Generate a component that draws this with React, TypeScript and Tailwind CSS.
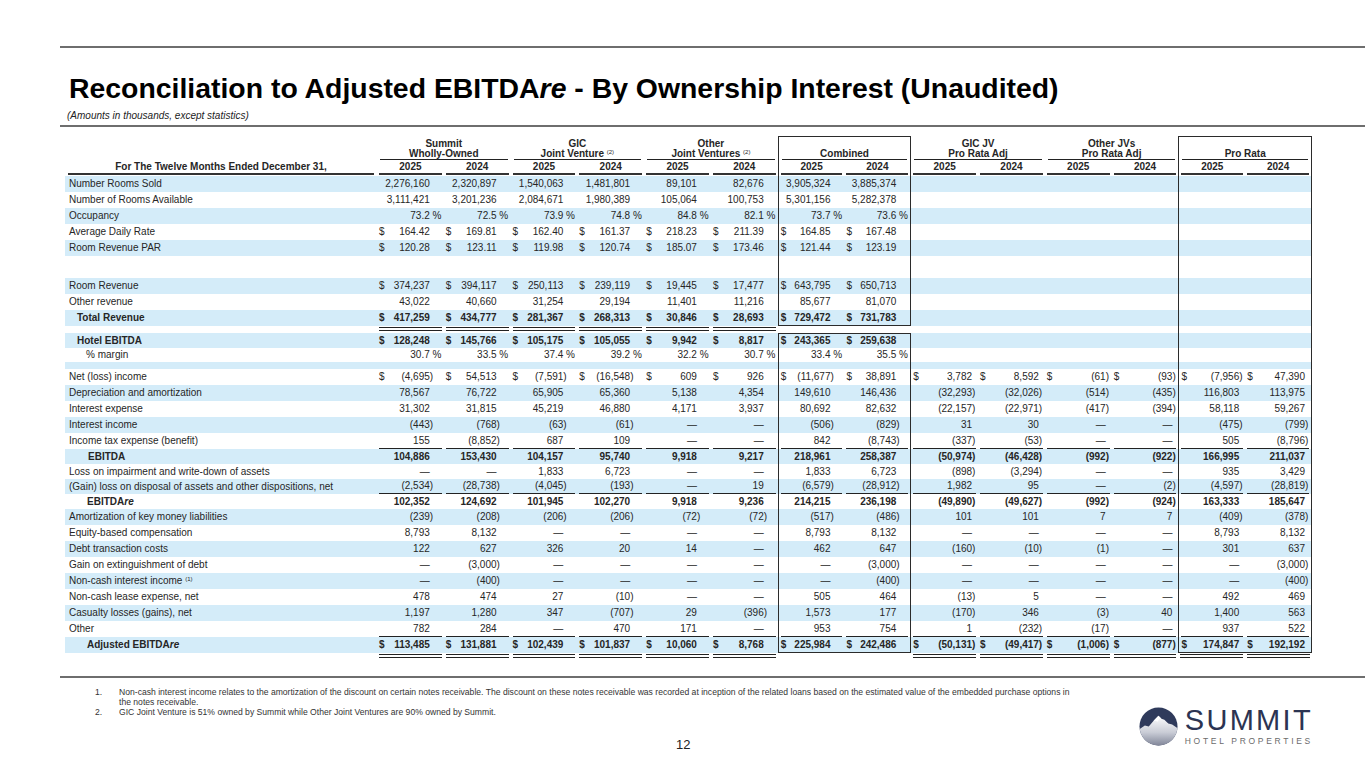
import type { ReactNode } from "react";
import clsx from "clsx";

const GRID = "grid grid-cols-[312px_repeat(14,minmax(0,1fr))]";

type Row = {
  label?: ReactNode;
  v?: string[];
  blue?: boolean;
  bold?: boolean;
  pl?: string;
  h?: string;
  ul?: boolean;
  combined?: boolean;
  cTop?: boolean;
  cBot?: boolean;
  pBot?: boolean;
};

const Re = () => <i>re</i>;

const rows: Row[] = [
  { label: "Number Rooms Sold", blue: true, v: ["2,276,160", "2,320,897", "1,540,063", "1,481,801", "89,101", "82,676", "3,905,324", "3,885,374"] },
  { label: "Number of Rooms Available", v: ["3,111,421", "3,201,236", "2,084,671", "1,980,389", "105,064", "100,753", "5,301,156", "5,282,378"] },
  { label: "Occupancy", blue: true, v: ["73.2 %", "72.5 %", "73.9 %", "74.8 %", "84.8 %", "82.1 %", "73.7 %", "73.6 %"] },
  { label: "Average Daily Rate", v: ["$164.42", "$169.81", "$162.40", "$161.37", "$218.23", "$211.39", "$164.85", "$167.48"] },
  { label: "Room Revenue PAR", blue: true, v: ["$120.28", "$123.11", "$119.98", "$120.74", "$185.07", "$173.46", "$121.44", "$123.19"] },
  { h: "h-[22px]" },
  { label: "Room Revenue", blue: true, v: ["$374,237", "$394,117", "$250,113", "$239,119", "$19,445", "$17,477", "$643,795", "$650,713"] },
  { label: "Other revenue", v: ["43,022", "40,660", "31,254", "29,194", "11,401", "11,216", "85,677", "81,070"] },
  { label: "Total Revenue", blue: true, bold: true, pl: "pl-[12px]", cBot: true, v: ["$417,259", "$434,777", "$281,367", "$268,313", "$30,846", "$28,693", "$729,472", "$731,783"] },
];

const rows2: Row[] = [
  { label: "Hotel EBITDA", blue: true, bold: true, pl: "pl-[12px]", h: "h-[15px]", cTop: true, v: ["$128,248", "$145,766", "$105,175", "$105,055", "$9,942", "$8,817", "$243,365", "$259,638"] },
  { label: "% margin", pl: "pl-[21px]", h: "h-[14px]", v: ["30.7 %", "33.5 %", "37.4 %", "39.2 %", "32.2 %", "30.7 %", "33.4 %", "35.5 %"] },
  { blue: true, h: "h-[7px]" },
  { label: "Net (loss) income", v: ["$(4,695)", "$54,513", "$(7,591)", "$(16,548)", "$609", "$926", "$(11,677)", "$38,891", "$3,782", "$8,592", "$(61)", "$(93)", "$(7,956)", "$47,390"] },
  { label: "Depreciation and amortization", blue: true, v: ["78,567", "76,722", "65,905", "65,360", "5,138", "4,354", "149,610", "146,436", "(32,293)", "(32,026)", "(514)", "(435)", "116,803", "113,975"] },
  { label: "Interest expense", v: ["31,302", "31,815", "45,219", "46,880", "4,171", "3,937", "80,692", "82,632", "(22,157)", "(22,971)", "(417)", "(394)", "58,118", "59,267"] },
  { label: "Interest income", blue: true, v: ["(443)", "(768)", "(63)", "(61)", "—", "—", "(506)", "(829)", "31", "30", "—", "—", "(475)", "(799)"] },
  { label: "Income tax expense (benefit)", ul: true, v: ["155", "(8,852)", "687", "109", "—", "—", "842", "(8,743)", "(337)", "(53)", "—", "—", "505", "(8,796)"] },
  { label: "EBITDA", blue: true, bold: true, pl: "pl-[23px]", h: "h-[15px]", v: ["104,886", "153,430", "104,157", "95,740", "9,918", "9,217", "218,961", "258,387", "(50,974)", "(46,428)", "(992)", "(922)", "166,995", "211,037"] },
  { label: "Loss on impairment and write-down of assets", h: "h-[15px]", v: ["—", "—", "1,833", "6,723", "—", "—", "1,833", "6,723", "(898)", "(3,294)", "—", "—", "935", "3,429"] },
  { label: "(Gain) loss on disposal of assets and other dispositions, net", blue: true, ul: true, h: "h-[15px]", v: ["(2,534)", "(28,738)", "(4,045)", "(193)", "—", "19", "(6,579)", "(28,912)", "1,982", "95", "—", "(2)", "(4,597)", "(28,819)"] },
  { label: <>EBITDA<Re /></>, bold: true, pl: "pl-[22px]", h: "h-[15px]", v: ["102,352", "124,692", "101,945", "102,270", "9,918", "9,236", "214,215", "236,198", "(49,890)", "(49,627)", "(992)", "(924)", "163,333", "185,647"] },
  { label: "Amortization of key money liabilities", blue: true, v: ["(239)", "(208)", "(206)", "(206)", "(72)", "(72)", "(517)", "(486)", "101", "101", "7", "7", "(409)", "(378)"] },
  { label: "Equity-based compensation", v: ["8,793", "8,132", "—", "—", "—", "—", "8,793", "8,132", "—", "—", "—", "—", "8,793", "8,132"] },
  { label: "Debt transaction costs", blue: true, v: ["122", "627", "326", "20", "14", "—", "462", "647", "(160)", "(10)", "(1)", "—", "301", "637"] },
  { label: "Gain on extinguishment of debt", v: ["—", "(3,000)", "—", "—", "—", "—", "—", "(3,000)", "—", "—", "—", "—", "—", "(3,000)"] },
  { label: <>Non-cash interest income <sup className="text-[6px]">(1)</sup></>, blue: true, v: ["—", "(400)", "—", "—", "—", "—", "—", "(400)", "—", "—", "—", "—", "—", "(400)"] },
  { label: "Non-cash lease expense, net", v: ["478", "474", "27", "(10)", "—", "—", "505", "464", "(13)", "5", "—", "—", "492", "469"] },
  { label: "Casualty losses (gains), net", blue: true, v: ["1,197", "1,280", "347", "(707)", "29", "(396)", "1,573", "177", "(170)", "346", "(3)", "40", "1,400", "563"] },
  { label: "Other", ul: true, v: ["782", "284", "—", "470", "171", "—", "953", "754", "1", "(232)", "(17)", "—", "937", "522"] },
  { label: <>Adjusted EBITDA<Re /></>, blue: true, bold: true, pl: "pl-[22px]", cBot: true, pBot: true, v: ["$113,485", "$131,881", "$102,439", "$101,837", "$10,060", "$8,768", "$225,984", "$242,486", "$(50,131)", "$(49,417)", "$(1,006)", "$(877)", "$174,847", "$192,192"] },
];

function Cell({ i, val, r }: { i: number; val?: string; r: Row }) {
  const right = i >= 8;
  const inC = r.combined !== false && (i === 6 || i === 7);
  const inP = i === 12 || i === 13;
  let s = val ?? "";
  const dollar = s.startsWith("$");
  if (dollar) s = s.slice(1);
  let suffix = "";
  if (s.endsWith(")")) {
    suffix = ")";
    s = s.slice(0, -1);
  } else if (s.endsWith(" %")) {
    suffix = " %";
    s = s.slice(0, -2);
  }
  return (
    <div
      className={clsx(
        "min-w-0 border-[#2b2b2b]",
        inC && i === 6 && "border-l",
        inC && i === 7 && "border-r",
        inP && i === 12 && "border-l",
        inP && i === 13 && "border-r",
        inC && r.cTop && "border-t",
        inC && r.cBot && "border-b",
        inP && r.pBot && "border-b"
      )}
    >
      <div className={clsx("mx-[2px] flex h-full items-center whitespace-pre", r.ul && "border-b border-[#222]")}>
        {dollar && <span>$</span>}
        <span className="ml-auto">{s}</span>
        <span className={right ? "w-[4px] shrink-0" : "w-[12px] shrink-0"}>{suffix}</span>
      </div>
    </div>
  );
}

function DataRow({ r }: { r: Row }) {
  return (
    <div className={clsx(GRID, r.h ?? "h-4", r.blue && "bg-[#d4ecf9]", r.bold && "font-bold")}>
      <div className={clsx("flex items-center whitespace-nowrap", r.pl ?? "pl-[4px]")}>
        <span>{r.label}</span>
      </div>
      {Array.from({ length: 14 }, (_, i) => (
        <Cell key={i} i={i} val={r.v?.[i]} r={r} />
      ))}
    </div>
  );
}

function DoubleRow({ cols, pro }: { cols: number[]; pro: boolean }) {
  return (
    <div className={clsx(GRID, "h-[7px]")}>
      <div />
      {Array.from({ length: 14 }, (_, i) => (
        <div
          key={i}
          className={clsx("border-[#2b2b2b]", pro && i === 12 && "border-l", pro && i === 13 && "border-r")}
        >
          {cols.includes(i) && <div className="mx-[2px] mt-px h-[4px] border-y border-[#222]" />}
        </div>
      ))}
    </div>
  );
}

const groups = [
  { top: "Summit", sub: <>Wholly-Owned</>, box: false },
  { top: "GIC", sub: <>Joint Venture <sup className="text-[6px] font-normal">(2)</sup></>, box: false },
  { top: "Other", sub: <>Joint Ventures <sup className="text-[6px] font-normal">(2)</sup></>, box: false },
  { top: "", sub: <>Combined</>, box: true },
  { top: "GIC JV", sub: <>Pro Rata Adj</>, box: false },
  { top: "Other JVs", sub: <>Pro Rata Adj</>, box: false },
  { top: "", sub: <>Pro Rata</>, box: true },
];

function Header() {
  return (
    <div className="font-bold">
      <div className={clsx(GRID, "h-[13px]")}>
        <div />
        {groups.map((g, k) => (
          <div
            key={k}
            className={clsx("col-span-2 flex items-end justify-center leading-[11px] border-[#2b2b2b]", g.box && "border-x border-t")}
          >
            {g.top}
          </div>
        ))}
      </div>
      <div className={clsx(GRID, "h-[11px]")}>
        <div />
        {groups.map((g, k) => (
          <div key={k} className={clsx("col-span-2 border-[#2b2b2b]", g.box && "border-x")}>
            <div className="mx-[3px] h-full border-b border-[#222] text-center leading-[10px] whitespace-nowrap">{g.sub}</div>
          </div>
        ))}
      </div>
      <div className={clsx(GRID, "h-[15px]")}>
        <div className="mx-[3px] flex items-center justify-center border-b-2 border-[#333]">
          For The Twelve Months Ended December 31,
        </div>
        {Array.from({ length: 14 }, (_, i) => (
          <div
            key={i}
            className={clsx(
              "border-[#2b2b2b]",
              (i === 6 || i === 12) && "border-l",
              (i === 7 || i === 13) && "border-r"
            )}
          >
            <div className="mx-[2px] flex h-full items-center justify-center border-b-2 border-[#333]">
              {i % 2 === 0 ? "2025" : "2024"}
            </div>
          </div>
        ))}
      </div>
      <div className={clsx(GRID, "h-px")}>
        <div />
        {Array.from({ length: 14 }, (_, i) => (
          <div
            key={i}
            className={clsx(
              "border-[#2b2b2b]",
              (i === 6 || i === 12) && "border-l",
              (i === 7 || i === 13) && "border-r"
            )}
          />
        ))}
      </div>
    </div>
  );
}

function Logo() {
  return (
    <div className="flex items-center gap-[7px]">
      <svg width="39" height="39" viewBox="0 0 40 40">
        <defs>
          <clipPath id="lc">
            <circle cx="20" cy="20" r="19.5" />
          </clipPath>
          <linearGradient id="snow" x1="0" y1="0" x2="0" y2="1">
            <stop offset="0" stopColor="#ffffff" />
            <stop offset="0.55" stopColor="#c9ccd6" />
            <stop offset="1" stopColor="#7f8497" />
          </linearGradient>
        </defs>
        <g clipPath="url(#lc)">
          <rect width="40" height="40" fill="#2f3a5b" />
          <path d="M0 23 L6 19 L10 20 L15 14 L18 11 L20 9 L23 12 L26 13 L30 17 L34 18 L40 22 L40 40 L0 40 Z" fill="url(#snow)" />
          <path d="M15 14 L18 11 L20 9 L23 12 L21 12 L19 15 L17 14 Z" fill="#ffffff" />
        </g>
      </svg>
      <div className="flex flex-col">
        <div className="text-[29px] leading-[26px] tracking-[2.3px] text-[#2c3452]">SUMMIT</div>
        <div className="mt-[4px] text-[8.5px] leading-[9px] tracking-[2.7px] text-[#6b6b6b]">HOTEL PROPERTIES</div>
      </div>
    </div>
  );
}

export default function App() {
  return (
    <div className="relative h-[768px] w-[1365px] overflow-hidden bg-white font-['Liberation_Sans',Arial,sans-serif] text-[#222]">
      <div className="pt-[46px]">
        <div className="ml-[60px] h-[2px] bg-[#6e6e6e]" />
        <h1 className="ml-[69px] mt-[24px] text-[28.4px] font-bold leading-[32px] text-black">
          Reconciliation to Adjusted EBITDA<i>re</i> - By Ownership Interest (Unaudited)
        </h1>
        <p className="ml-[67px] mt-[6px] text-[10px] italic leading-[12px] text-[#222]">
          (Amounts in thousands, except statistics)
        </p>
        <div className="ml-[60px] mt-[3px] h-[2px] bg-[#6e6e6e]" />

        <div className="ml-[65px] mt-[9px] w-[1247px] text-[10px] leading-[12px] text-[#262626]">
          <Header />
          {rows.map((r, k) => (
            <DataRow key={k} r={r} />
          ))}
          <DoubleRow cols={[0, 1, 2, 3, 4, 5]} pro />
          {rows2.map((r, k) => (
            <DataRow key={k} r={r} />
          ))}
          <DoubleRow cols={[0, 1, 2, 3, 4, 5, 8, 9, 10, 11, 12, 13]} pro={false} />
        </div>

        <div className="ml-[60px] mt-[16px] h-[2px] bg-[#6e6e6e]" />
        <div className="flex">
          <div className="flex-1">
            <ol className="pl-[95px] pt-[9px] text-[8.6px] leading-[10px] text-[#333]">
              <li className="flex">
                <span className="w-[24px] shrink-0">1.</span>
                <span className="whitespace-nowrap">
                  Non-cash interest income relates to the amortization of the discount on certain notes receivable. The discount on these notes receivable was recorded at inception of the related loans based on the estimated value of the embedded purchase options in
                  <br />
                  the notes receivable.
                </span>
              </li>
              <li className="flex">
                <span className="w-[24px] shrink-0">2.</span>
                <span>GIC Joint Venture is 51% owned by Summit while Other Joint Ventures are 90% owned by Summit.</span>
              </li>
            </ol>
            <div className="mt-[20px] pl-[676px] text-[13px] leading-[16px] text-[#222]">12</div>
          </div>
          <div className="pr-[52px] pt-[29px]">
            <Logo />
          </div>
        </div>
      </div>
    </div>
  );
}
